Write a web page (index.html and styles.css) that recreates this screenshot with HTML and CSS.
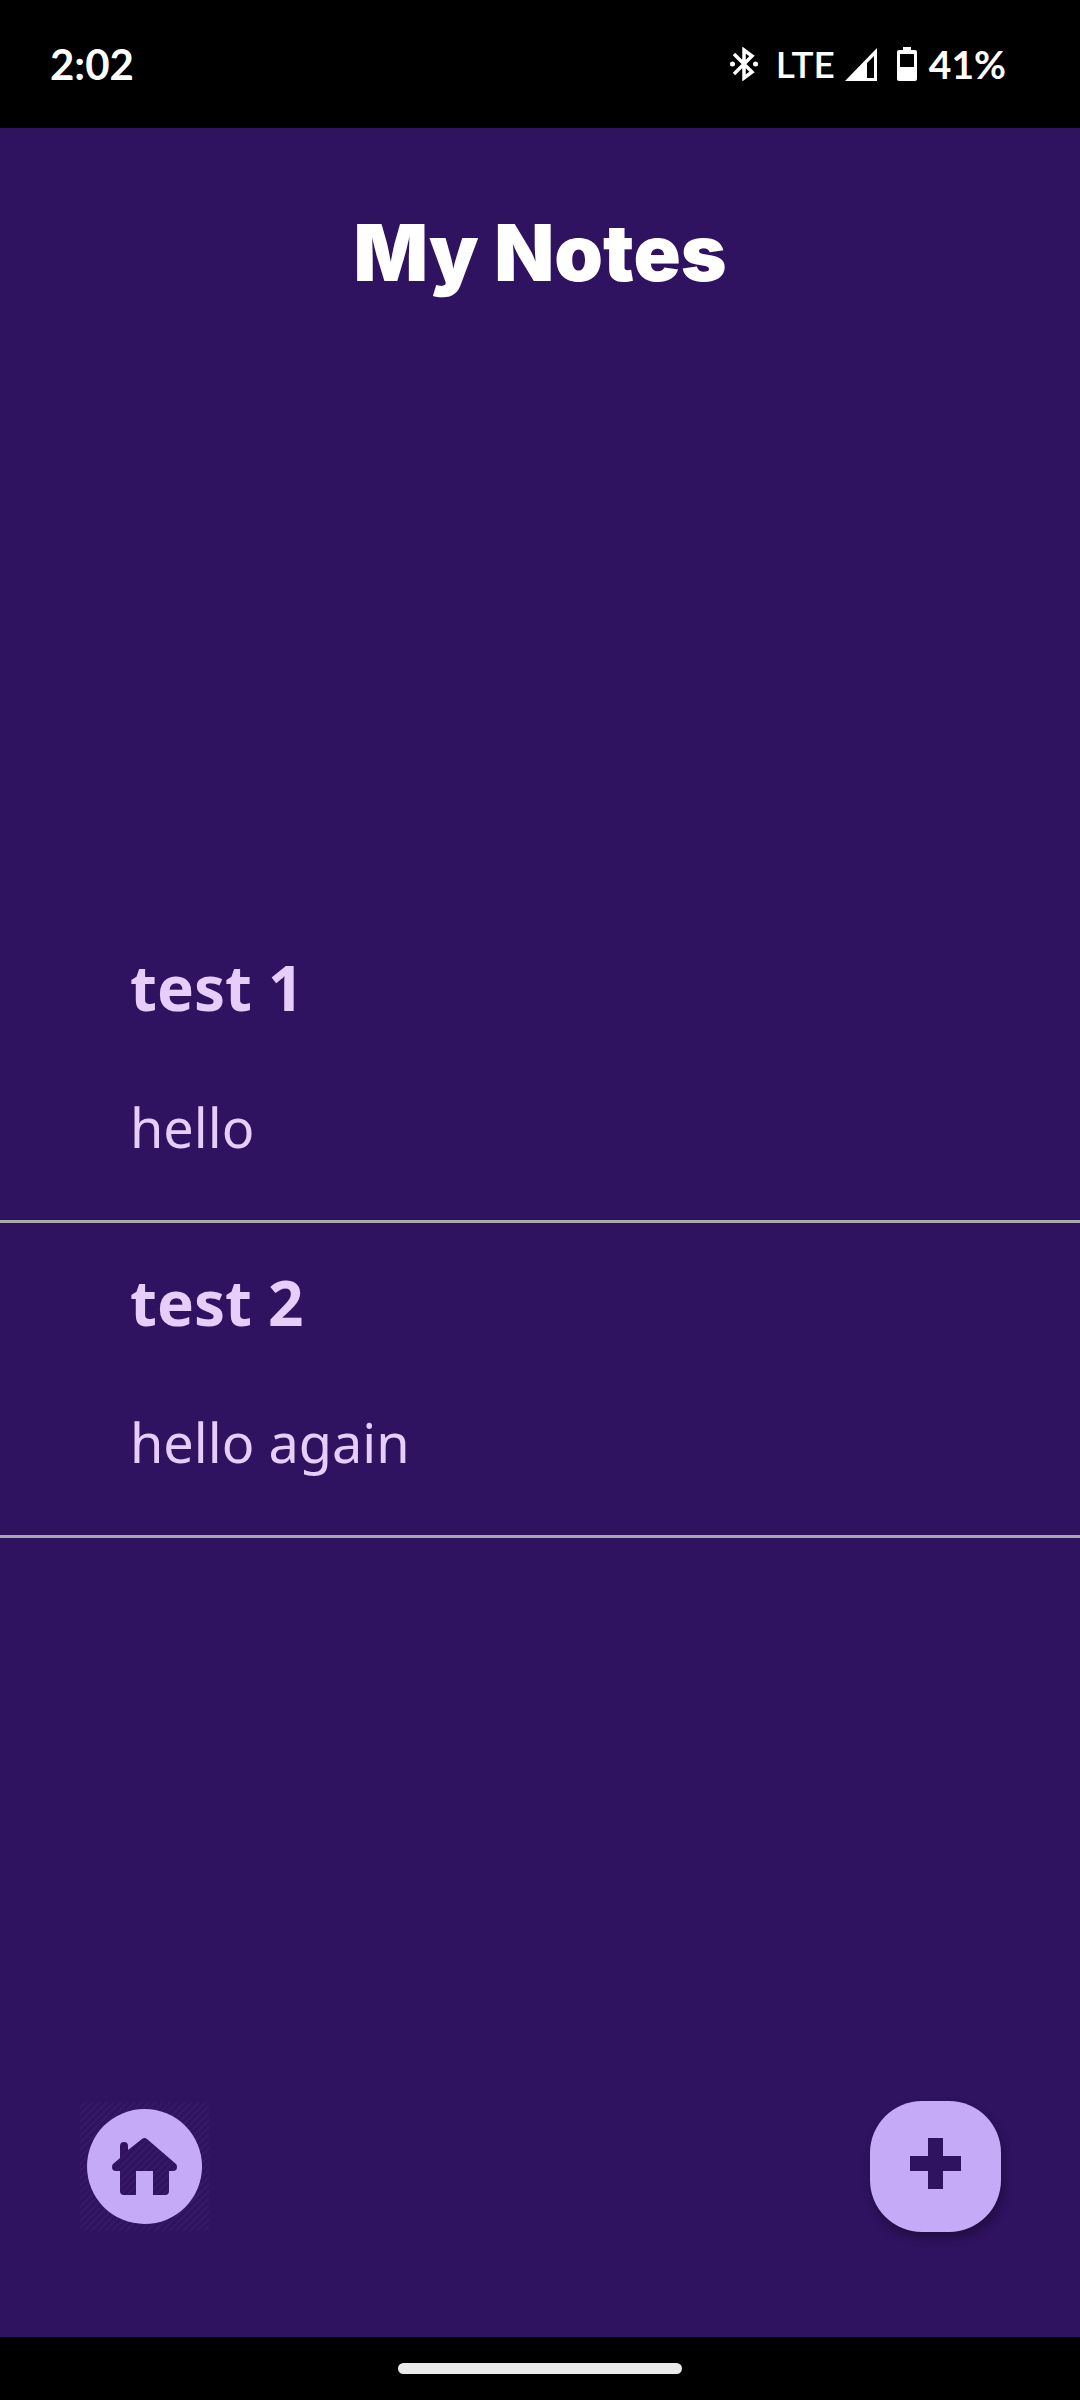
FILE: index.html
```html
<!DOCTYPE html>
<html lang="en">
<head>
<meta charset="utf-8">
<meta name="viewport" content="width=device-width, initial-scale=1">
<title>My Notes</title>
<link rel="stylesheet" href="styles.css">
</head>
<body>
<div class="status-bar">
  <span class="clock">2:02</span>
  <div class="indicators">
    <svg class="bluetooth" viewBox="0 0 28 34" aria-hidden="true">
      <path d="M4 7 22 25 14 31V3l8 6L4 27" fill="none" stroke="currentColor" stroke-width="3.500"/>
      <circle cx="2.500" cy="17" r="2.500" fill="currentColor"/>
      <circle cx="25.500" cy="17" r="2.500" fill="currentColor"/>
    </svg>
    <span class="network">LTE</span>
    <svg class="signal" viewBox="0 0 32 33" aria-hidden="true">
      <path d="M32 0v33H0zM29 8l-7 7v15h7z" fill="currentColor" fill-rule="evenodd"/>
    </svg>
    <svg class="battery" viewBox="0 0 20 34" aria-hidden="true">
      <path d="M6 0h8v3h4a2 2 0 0 1 2 2v27a2 2 0 0 1-2 2H2a2 2 0 0 1-2-2V5a2 2 0 0 1 2-2h4zM3 7v13h14V7z" fill="currentColor" fill-rule="evenodd"/>
    </svg>
    <span class="charge">41%</span>
  </div>
</div>

<main class="screen">
  <header class="header">
    <h1 class="title">My Notes</h1>
  </header>
  <ul class="notes">
    <li class="note">
      <h2 class="note-title">test 1</h2>
      <p class="note-text">hello</p>
    </li>
    <li class="note">
      <h2 class="note-title">test 2</h2>
      <p class="note-text">hello again</p>
    </li>
  </ul>
  <div class="actions">
    <button class="home" type="button" aria-label="Home">
      <svg class="home-icon" viewBox="0 0 115 115" aria-hidden="true">
        <path fill="#c5abf7" fill-rule="evenodd" d="M57.500 0a57.500 57.500 0 1 1 0 115a57.500 57.500 0 0 1 0-115zM55 30 41 41V37q0-4-4-4t-4 4v12l-7 6q-1 1-1 3 0 4 4 4h4v20q0 4 4 4h12V62h17v24h12q4 0 4-4V62h4q4 0 4-4 0-2-1-3L60 30q-2.500-2-5 0z"/>
      </svg>
    </button>
    <button class="add" type="button" aria-label="Add note">
      <svg class="add-icon" viewBox="0 0 51 51" aria-hidden="true">
        <path d="M18 0h15v18h18v15H33v18H18V33H0V18h18z" fill="currentColor"/>
      </svg>
    </button>
  </div>
</main>

<div class="nav-bar"><span class="nav-handle"></span></div>
</body>
</html>
```

FILE: styles.css
```css
* {
  box-sizing: border-box;
}

body {
  margin: 0;
  min-height: 100vh;
  display: flex;
  flex-direction: column;
  background: #000;
  color: #fff;
  font-family: "Noto Sans", sans-serif;
}

.status-bar {
  display: flex;
  justify-content: space-between;
  align-items: center;
  height: 128px;
  padding: 0 74px 0 50px;
  font-family: Lato, sans-serif;
  font-weight: 600;
}

.clock,
.charge {
  font-weight: 700;
  line-height: 48px;
}

.clock {
  font-size: 42px;
}

.charge {
  font-size: 39px;
}

.network {
  font-size: 37px;
  line-height: 48px;
  margin: 0 10px 0 18px;
}

.indicators {
  display: flex;
  align-items: center;
}

.bluetooth {
  width: 28px;
  height: 34px;
}

.signal {
  width: 32px;
  height: 33px;
}

.battery {
  width: 20px;
  height: 34px;
  margin: 0 12px 0 20px;
}

.screen {
  flex: 1;
  display: flex;
  flex-direction: column;
  background: #2f1260;
}

.header {
  padding: 77px 24px 44px;
}

.title {
  margin: 0;
  font-family: Inter, sans-serif;
  font-size: 78px;
  font-weight: 900;
  line-height: 96px;
  text-align: center;
}

.notes {
  flex: 1;
  display: flex;
  flex-direction: column;
  justify-content: center;
  margin: 0;
  padding: 0;
  list-style: none;
  color: #e7cdf9;
}

.note {
  padding: 39px 130px 53px;
  border-bottom: 3px solid #aaa;
}

.note-title {
  margin: 0 0 60px;
  font-size: 62px;
  font-weight: 700;
  line-height: 80px;
}

.note-text {
  margin: 0;
  font-size: 54px;
  line-height: 80px;
}

.actions {
  display: flex;
  justify-content: space-between;
  align-items: center;
  padding: 0 79px 105px 80px;
}

.home,
.add {
  display: grid;
  place-items: center;
  padding: 0;
  border: 0;
}

.home {
  width: 129px;
  height: 129px;
  background: repeating-linear-gradient(135deg, #2f1260 0 3px, #351867 3px 5px);
}

.home-icon {
  width: 115px;
  height: 115px;
}

.add {
  width: 131px;
  height: 131px;
  border-radius: 52px;
  background: #c5abf7;
  color: #2f1260;
  box-shadow: 2px 6px 10px rgba(0, 0, 0, 0.3);
}

.add-icon {
  width: 51px;
  height: 51px;
  margin-bottom: 6px;
}

.nav-bar {
  display: flex;
  justify-content: center;
  align-items: center;
  height: 63px;
}

.nav-handle {
  width: 284px;
  height: 11px;
  border-radius: 6px;
  background: #ebebeb;
}
```
